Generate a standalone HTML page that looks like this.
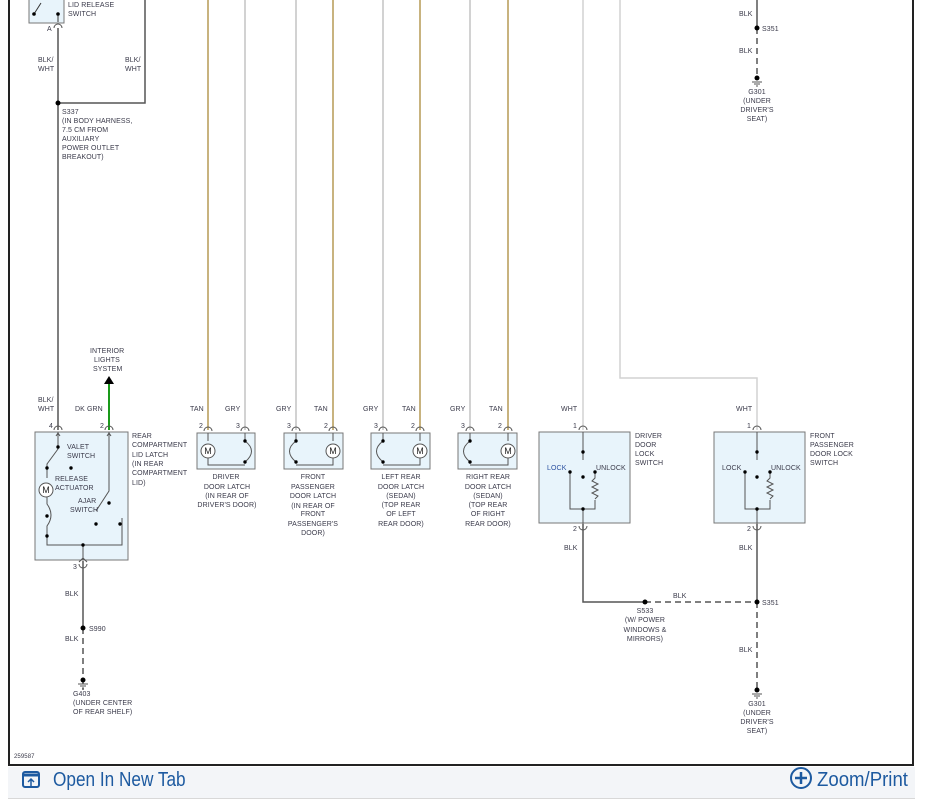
<!DOCTYPE html>
<html><head><meta charset="utf-8"><style>
html,body{margin:0;padding:0;background:#fff;width:927px;height:805px;overflow:hidden}
svg{position:absolute;left:0;top:0}
.t{font-family:"Liberation Sans",sans-serif;font-size:7px;fill:#3a3a4a;letter-spacing:0.1px}
.bar{position:absolute;left:8px;top:767px;width:907px;height:31px;background:#f3f5f8;border-bottom:1px solid #d8d8d8}
.lnk{position:absolute;top:769px;font-family:"Liberation Sans Narrow","Liberation Sans",sans-serif;font-size:20px;color:#1d5aa0;transform:scaleX(0.86);transform-origin:left}
</style></head><body>
<div class="bar"></div>
<svg width="927" height="805" viewBox="0 0 927 805">
<line x1="9" y1="0" x2="9" y2="766" stroke="#222" stroke-width="2"/>
<line x1="913" y1="0" x2="913" y2="766" stroke="#222" stroke-width="2"/>
<line x1="8" y1="765" x2="914" y2="765" stroke="#222" stroke-width="2"/>
<g fill="none" stroke-width="1.5">
<path d="M58 28 V430 M145 0 V103 H58" stroke="#555"/>
<path d="M83 561 V628" stroke="#555"/>
<path d="M583 524 V602 H645" stroke="#555"/>
<path d="M757 524 V602" stroke="#555"/>
<path d="M757 0 V28" stroke="#555"/>
<path d="M645 602 H757 M757 602 V690 M83 628 V690 M757 28 V78" stroke="#555" stroke-dasharray="6,4"/>
<path d="M208 0 V430 M333 0 V430 M420 0 V430 M508 0 V430" stroke="#b59a55"/>
<path d="M245 0 V430 M296 0 V430 M383 0 V430 M470 0 V430" stroke="#c4c4c4"/>
<path d="M583 0 V430 M620 0 V378 H757 V430" stroke="#d2d2d2"/>
<path d="M109 378 V430" stroke="#1a9a1a" stroke-width="2"/>
</g>
<path d="M104 384 L109 376 L114 384 Z" fill="#000"/>
<rect x="29" y="-2" width="35" height="25" fill="#e8f4fb" stroke="#777"/>
<path d="M34 14 L41 3 M58 14 V22" stroke="#333" fill="none"/>
<circle cx="34" cy="14" r="1.8"/><circle cx="58" cy="14" r="1.8"/>
<path d="M54 28 A4 4 0 0 1 62 28" fill="none" stroke="#555"/>
<circle cx="58" cy="103" r="2.5"/>
<g fill="#e8f4fb" stroke="#777">
<rect x="35" y="432" width="93" height="128"/>
<rect x="197" y="433" width="58" height="36"/>
<rect x="284" y="433" width="59" height="36"/>
<rect x="371" y="433" width="59" height="36"/>
<rect x="458" y="433" width="59" height="36"/>
<rect x="539" y="432" width="91" height="91"/>
<rect x="714" y="432" width="91" height="91"/>
</g>
<g fill="none" stroke="#555" stroke-width="1">
<path d="M54 430 A4 4 0 0 1 62 430 M105 430 A4 4 0 0 1 113 430 M204 431 A4 4 0 0 1 212 431 M241 431 A4 4 0 0 1 249 431 M292 431 A4 4 0 0 1 300 431 M329 431 A4 4 0 0 1 337 431 M379 431 A4 4 0 0 1 387 431 M416 431 A4 4 0 0 1 424 431 M466 431 A4 4 0 0 1 474 431 M504 431 A4 4 0 0 1 512 431 M579 430 A4 4 0 0 1 587 430 M753 430 A4 4 0 0 1 761 430"/>
<path d="M79 564 A4 4 0 0 0 87 564 M579 526 A4 4 0 0 0 587 526 M753 526 A4 4 0 0 0 761 526"/>
<path d="M58 432 V449 L47 464 V478 M47 496 V504 Q55 515 47 526 V528 M47 528 V545 H122 V518 M83 545 V560 M109 432 V491 L96 511 M79 562 L83 558 L87 562"/>
<path d="M56 436 L58 433 L60 436 M107 436 L109 433 L111 436"/>
<path d="M208 433 V441 M208 458 V465 H245 V465 M245 441 Q258 451 245 462 M245 433 V441"/>
<path d="M333 433 V441 M333 458 V465 H296 M296 441 Q283 451 296 462 M296 433 V441"/>
<path d="M420 433 V441 M420 458 V465 H383 M383 441 Q370 451 383 462 M383 433 V441"/>
<path d="M508 433 V441 M508 458 V465 H470 M470 441 Q457 451 470 462 M470 433 V441"/>
<path d="M583 432 V460 M570 472 V509 H595 V500 M595 472 V478 L592 481 L598 484 L592 487 L598 490 L592 493 L598 496 L595 499 M583 509 V524"/>
<path d="M757 432 V460 M745 472 V509 H770 V500 M770 472 V478 L767 481 L773 484 L767 487 L773 490 L767 493 L773 496 L770 499 M757 509 V524"/>
</g>
<g fill="#fff" stroke="#555">
<circle cx="46" cy="490" r="7"/><circle cx="208" cy="451" r="7"/><circle cx="333" cy="451" r="7"/><circle cx="420" cy="451" r="7"/><circle cx="508" cy="451" r="7"/>
</g>
<g font-family="Liberation Sans,sans-serif" font-size="9" fill="#222" text-anchor="middle">
<text x="46" y="493">M</text><text x="208" y="454">M</text><text x="333" y="454">M</text><text x="420" y="454">M</text><text x="508" y="454">M</text>
</g>
<g fill="#000">
<circle cx="58" cy="447" r="1.7"/><circle cx="47" cy="468" r="1.7"/><circle cx="71" cy="468" r="1.7"/><circle cx="47" cy="516" r="1.7"/><circle cx="47" cy="536" r="1.7"/><circle cx="83" cy="545" r="1.7"/><circle cx="96" cy="524" r="1.7"/><circle cx="109" cy="503" r="1.7"/><circle cx="120" cy="524" r="1.7"/>
<circle cx="245" cy="441" r="1.7"/><circle cx="245" cy="462" r="1.7"/><circle cx="296" cy="441" r="1.7"/><circle cx="296" cy="462" r="1.7"/><circle cx="383" cy="441" r="1.7"/><circle cx="383" cy="462" r="1.7"/><circle cx="470" cy="441" r="1.7"/><circle cx="470" cy="462" r="1.7"/>
<circle cx="583" cy="452" r="1.7"/><circle cx="583" cy="477" r="1.7"/><circle cx="570" cy="472" r="1.7"/><circle cx="595" cy="472" r="1.7"/><circle cx="583" cy="509" r="1.7"/>
<circle cx="757" cy="452" r="1.7"/><circle cx="757" cy="477" r="1.7"/><circle cx="745" cy="472" r="1.7"/><circle cx="770" cy="472" r="1.7"/><circle cx="757" cy="509" r="1.7"/>
<circle cx="83" cy="628" r="2.5"/><circle cx="645" cy="602" r="2.5"/><circle cx="757" cy="602" r="2.5"/><circle cx="757" cy="28" r="2.5"/>
<circle cx="83" cy="680" r="2.5"/><circle cx="757" cy="690" r="2.5"/><circle cx="757" cy="78" r="2.5"/>
</g>
<g stroke="#555" fill="none"><path d="M78 684 H88 M80 686 H86 M82 688 H84 M752 694 H762 M754 696 H760 M756 698 H758 M752 82 H762 M754 84 H760 M756 86 H758"/></g>
<g class="t">
<text x="68" y="7">LID RELEASE</text><text x="68" y="16">SWITCH</text>
<text x="47" y="31">A</text>
<text x="38" y="62">BLK/</text><text x="38" y="71">WHT</text>
<text x="125" y="62">BLK/</text><text x="125" y="71">WHT</text>
<text x="62" y="114">S337</text><text x="62" y="123">(IN BODY HARNESS,</text><text x="62" y="132">7.5 CM FROM</text><text x="62" y="141">AUXILIARY</text><text x="62" y="150">POWER OUTLET</text><text x="62" y="159">BREAKOUT)</text>
<text x="90" y="353">INTERIOR</text><text x="94" y="362">LIGHTS</text><text x="93" y="371">SYSTEM</text>
<text x="38" y="402">BLK/</text><text x="38" y="411">WHT</text><text x="75" y="411">DK GRN</text>
<text x="49" y="428">4</text><text x="100" y="428">2</text>
<text x="132" y="438">REAR</text><text x="132" y="447">COMPARTMENT</text><text x="132" y="457">LID LATCH</text><text x="132" y="466">(IN REAR</text><text x="132" y="475">COMPARTMENT</text><text x="132" y="485">LID)</text>
<text x="67" y="449">VALET</text><text x="67" y="458">SWITCH</text>
<text x="55" y="481">RELEASE</text><text x="55" y="490">ACTUATOR</text>
<text x="78" y="503">AJAR</text><text x="70" y="512">SWITCH</text>
<text x="73" y="569">3</text>
<text x="65" y="596">BLK</text><text x="89" y="631">S990</text><text x="65" y="641">BLK</text>
<text x="73" y="696">G403</text><text x="73" y="705">(UNDER CENTER</text><text x="73" y="714">OF REAR SHELF)</text>
<text x="190" y="411">TAN</text><text x="225" y="411">GRY</text><text x="276" y="411">GRY</text><text x="314" y="411">TAN</text>
<text x="363" y="411">GRY</text><text x="402" y="411">TAN</text><text x="450" y="411">GRY</text><text x="489" y="411">TAN</text>
<text x="199" y="428">2</text><text x="236" y="428">3</text><text x="287" y="428">3</text><text x="324" y="428">2</text>
<text x="374" y="428">3</text><text x="411" y="428">2</text><text x="461" y="428">3</text><text x="498" y="428">2</text>
</g>
<g class="t" text-anchor="middle">
<text x="226" y="479">DRIVER</text><text x="227" y="489">DOOR LATCH</text><text x="227" y="498">(IN REAR OF</text><text x="227" y="507">DRIVER'S DOOR)</text>
<text x="313" y="479">FRONT</text><text x="313" y="489">PASSENGER</text><text x="313" y="498">DOOR LATCH</text><text x="313" y="508">(IN REAR OF</text><text x="313" y="516">FRONT</text><text x="313" y="526">PASSENGER'S</text><text x="313" y="535">DOOR)</text>
<text x="401" y="479">LEFT REAR</text><text x="401" y="489">DOOR LATCH</text><text x="401" y="498">(SEDAN)</text><text x="401" y="507">(TOP REAR</text><text x="401" y="516">OF LEFT</text><text x="401" y="526">REAR DOOR)</text>
<text x="488" y="479">RIGHT REAR</text><text x="488" y="489">DOOR LATCH</text><text x="488" y="498">(SEDAN)</text><text x="488" y="507">(TOP REAR</text><text x="488" y="516">OF RIGHT</text><text x="488" y="526">REAR DOOR)</text>
<text x="645" y="613">S533</text><text x="645" y="622">(W/ POWER</text><text x="645" y="632">WINDOWS &amp;</text><text x="645" y="641">MIRRORS)</text>
<text x="757" y="706">G301</text><text x="757" y="715">(UNDER</text><text x="757" y="724">DRIVER'S</text><text x="757" y="733">SEAT)</text>
<text x="757" y="94">G301</text><text x="757" y="103">(UNDER</text><text x="757" y="112">DRIVER'S</text><text x="757" y="121">SEAT)</text>
</g>
<g class="t">
<text x="561" y="411">WHT</text><text x="573" y="428">1</text>
<text x="635" y="438">DRIVER</text><text x="635" y="447">DOOR</text><text x="635" y="456">LOCK</text><text x="635" y="465">SWITCH</text>
<text x="547" y="470" fill="#2a50a0">LOCK</text><text x="596" y="470">UNLOCK</text>
<text x="573" y="531">2</text><text x="564" y="550">BLK</text>
<text x="736" y="411">WHT</text><text x="747" y="428">1</text>
<text x="810" y="438">FRONT</text><text x="810" y="447">PASSENGER</text><text x="810" y="456">DOOR LOCK</text><text x="810" y="465">SWITCH</text>
<text x="722" y="470">LOCK</text><text x="771" y="470">UNLOCK</text>
<text x="747" y="531">2</text><text x="739" y="550">BLK</text>
<text x="673" y="598">BLK</text><text x="762" y="605">S351</text><text x="739" y="652">BLK</text>
<text x="739" y="16">BLK</text><text x="762" y="31">S351</text><text x="739" y="53">BLK</text>
<text x="14" y="758" font-size="6">259587</text>
</g>
<rect x="23" y="772" width="16" height="15" rx="2" fill="none" stroke="#1d5aa0" stroke-width="2"/>
<path d="M23 775 H39" stroke="#1d5aa0" stroke-width="3"/>
<path d="M31 786 V779 M28 782 L31 779 L34 782" stroke="#1d5aa0" stroke-width="1.5" fill="none"/>
<circle cx="801" cy="778" r="10" fill="none" stroke="#1d5aa0" stroke-width="2"/>
<path d="M801 772 V784 M795 778 H807" stroke="#1d5aa0" stroke-width="2.5"/>
</svg>
<div class="lnk" style="left:53px">Open In New Tab</div>
<div class="lnk" style="left:817px;transform:scaleX(0.93)">Zoom/Print</div>
</body></html>
